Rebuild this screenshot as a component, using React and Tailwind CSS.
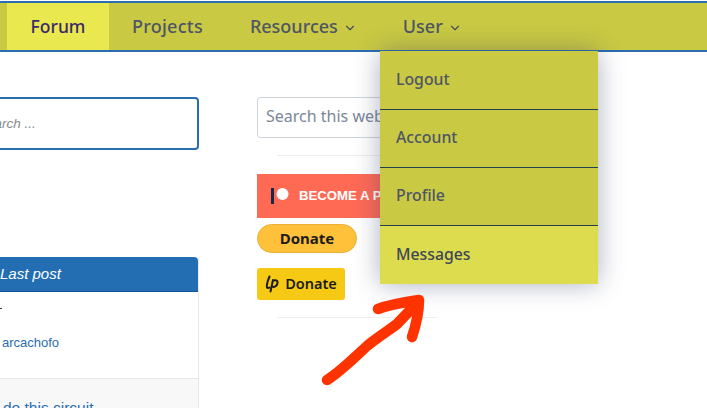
import { ChevronDown } from 'lucide-react';

const NavItem = ({ label, active, caret, className = '' }) => (
  <a
    className={`flex h-full items-center gap-[5px] font-medium ${active ? 'bg-[#e9e84f] text-[17.5px] text-[#3b2a6b]' : 'text-[18px] text-[#4d5566]'} ${className}`}
  >
    {label}
    {caret && <ChevronDown className="mt-[3px] h-[14px] w-[14px] text-[#434b5c]" strokeWidth={1.9} />}
  </a>
);

const MenuItem = ({ label, highlight, last }) => (
  <a
    className={`flex h-[58px] items-center pl-4 text-[15.8px] font-medium ${last ? '' : 'border-b border-[#24404f] pb-[2px]'} ${highlight ? 'bg-[#dcdc4e] text-[#3d4657]' : 'text-[#4d5566]'}`}
  >
    {label}
  </a>
);

const RedArrow = () => (
  <svg className="absolute left-[316px] top-[290px]" width="116" height="100" viewBox="0 0 116 100" fill="none">
    <path
      d="M11 90 C24 82 38 68 51 56 C62 47 72 41 81 34 L103 11 M62 19 C75 14 90 12 103 10 C103 22 100 35 96 47"
      stroke="#ff3300"
      strokeWidth="10.5"
      strokeLinecap="round"
      strokeLinejoin="round"
    />
  </svg>
);

export default function App() {
  return (
    <div className="relative h-[408px] w-[707px] overflow-hidden bg-white font-['Noto_Sans',sans-serif]">
      <div className="mt-[1px] h-[51px] border-y-2 border-[#2a6db0] bg-[#c9c943]">
        <nav className="flex h-full items-center pl-[7px]">
          <NavItem label="Forum" active className="w-[102px] justify-center" />
          <NavItem label="Projects" className="ml-[23px] tracking-[0.25px]" />
          <NavItem label="Resources" caret className="ml-[47px]" />
          <NavItem label="User" caret className="ml-[46px]" />
        </nav>
      </div>

      <div className="flex items-start">
        <main className="w-[199px] shrink-0 overflow-hidden pt-[45px]">
          <div className="-ml-6 flex h-[53px] w-[223px] items-center rounded-[4px] border-2 border-[#2a6db0] pt-[1px] font-['Liberation_Sans',sans-serif] text-[13.5px] italic text-[#8a8a8a]">
            Search ...
          </div>
          <div className="-ml-6 mt-[107px] w-[223px] border-r border-[#e8e8e8] font-['Liberation_Sans',sans-serif]">
            <div className="flex h-[35px] items-center rounded-tr-[4px] border-b border-[#0f5596] bg-[#236db2] pl-[24px] text-[15px] italic text-white">
              Last post
            </div>
            <div className="relative h-[87px] border-b border-[#e8e8e8] bg-white">
              <span className="absolute left-[24px] top-[16px] block h-px w-[2px] bg-[#333]" />
              <a className="absolute left-[26px] top-[41px] text-[13px] text-[#2a6db0]">arcachofo</a>
            </div>
            <div className="h-[40px] bg-[#f8f8f8] pl-[27px] pt-[17px] text-[15.5px] text-[#2a6db0]">do this circuit</div>
          </div>
        </main>

        <aside className="ml-[58px] w-[200px] pt-[45px]">
          <div className="flex h-[41px] items-center rounded-[3px] border border-[#ced4da] pb-[3px] pl-2 text-[16px] text-[#7b8799]">
            Search this website
          </div>
          <div className="ml-[20px] mt-[17px] w-[160px] border-t border-[#eeeeee]" />
          <div className="mt-[18px] flex h-[44px] w-[148px] items-center overflow-hidden bg-[#ff6a55] pl-[14px] font-['Liberation_Sans',sans-serif] text-[13.2px] font-bold whitespace-nowrap text-white">
            <svg className="mr-[10px] shrink-0" width="18" height="16" viewBox="0 0 18 16">
              <rect x="0" y="0" width="3" height="16" fill="#14284a" />
              <circle cx="11.5" cy="6" r="6" fill="#ffffff" />
            </svg>
            BECOME A PATRON
          </div>
          <div className="mt-[6px] flex h-[29px] w-[100px] items-center justify-center rounded-full border border-[#eab13a] bg-[#ffc03a] text-[15px] font-bold text-[#1c1c1c]">
            Donate
          </div>
          <div className="mt-[15px] flex h-[32px] w-[88px] items-center justify-center gap-[6px] rounded-[3px] bg-[#f6c915] text-[14.5px] font-semibold text-[#1c1c1c]">
            <svg width="14" height="18" viewBox="0 0 14 18" fill="none" stroke="#1c1c1c" strokeWidth="2" strokeLinecap="round">
              <path d="M4.5 1.5 C3 5 2 8 1.8 10.5 C1.6 13 3 13.5 4.5 12.5" />
              <path d="M8 5 L5.5 16.5 M7.5 6.5 C9 4.5 13 4.5 12.5 8 C12 11.5 9 12.5 6.8 11.5" />
            </svg>
            Donate
          </div>
          <div className="ml-[20px] mt-[17px] w-[160px] border-t border-[#eeeeee]" />
        </aside>
      </div>

      <div className="absolute left-[380px] top-[51px] w-[218px] bg-[#c9c943] pt-px shadow-[0_0_24px_rgba(50,60,100,0.4)]">
        <MenuItem label="Logout" />
        <MenuItem label="Account" />
        <MenuItem label="Profile" />
        <MenuItem label="Messages" highlight last />
      </div>
      <RedArrow />
    </div>
  );
}
